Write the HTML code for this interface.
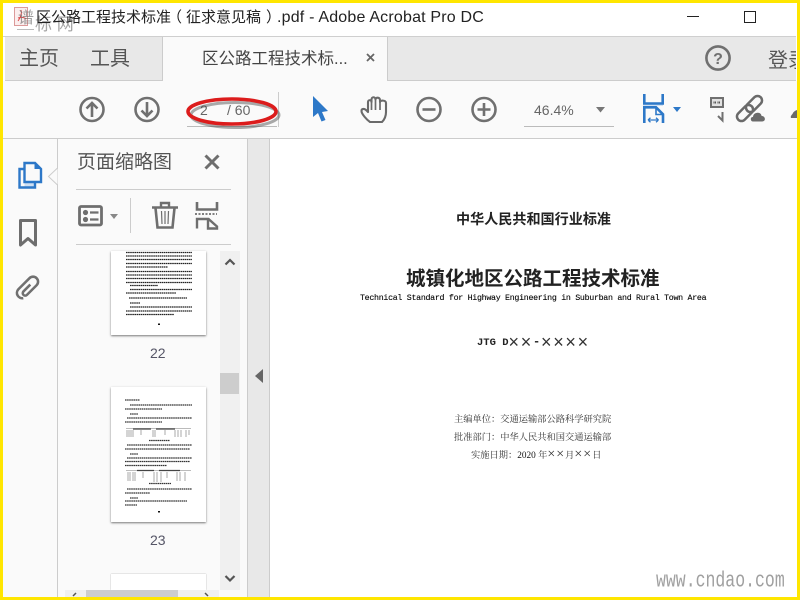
<!DOCTYPE html>
<html><head><meta charset="utf-8"><style>
html,body{margin:0;padding:0;width:800px;height:600px;overflow:hidden;background:#fff}
body{position:relative;font-family:"Liberation Sans","Noto Sans CJK SC",sans-serif;color:#444}
.a{position:absolute;white-space:nowrap}
.b{position:absolute}
.doc{font-family:"Liberation Serif","Noto Serif CJK SC",serif;color:#222}
svg{position:absolute;overflow:visible}
</style></head><body>
<div class="b" style="left:3px;top:36px;width:793px;height:1px;background:#cfcfcf"></div>
<div class="b" style="left:5px;top:37px;width:791px;height:43px;background:#e8e8e8"></div>
<div class="b" style="left:162px;top:37px;width:1px;height:44px;background:#ccc"></div>
<div class="b" style="left:163px;top:37px;width:224px;height:44px;background:#fafafa"></div>
<div class="b" style="left:387px;top:37px;width:1px;height:44px;background:#ccc"></div>
<div class="b" style="left:5px;top:80px;width:157px;height:1px;background:#ccc"></div>
<div class="b" style="left:388px;top:80px;width:408px;height:1px;background:#ccc"></div>
<div class="b" style="left:3px;top:81px;width:794px;height:57px;background:#fafafa"></div>
<div class="b" style="left:3px;top:138px;width:794px;height:1px;background:#ccc"></div>
<div class="b" style="left:3px;top:139px;width:54px;height:458px;background:#fafafa"></div>
<div class="b" style="left:57px;top:139px;width:1px;height:458px;background:#ccc"></div>
<div class="b" style="left:58px;top:139px;width:189px;height:458px;background:#fafafa"></div>
<div class="b" style="left:247px;top:139px;width:1px;height:458px;background:#ccc"></div>
<div class="b" style="left:248px;top:139px;width:21px;height:458px;background:#e8e8e8"></div>
<div class="b" style="left:269px;top:139px;width:1px;height:458px;background:#ccc"></div>

<!-- app icon + title -->
<svg style="left:0;top:0" width="100" height="36"><rect x="14.500" y="7.500" width="13" height="18" fill="#fbeeee" stroke="#dc9a9a"/><path d="M18 21c3-4 4-8 3-11m-3 8c3-1 6-1 8 1" fill="none" stroke="#d84a4a"/><path d="M17 29.500h17" stroke="#bbb"/></svg>
<div class="a" style="left:18px;top:8px;font-size:16px;line-height:22px;color:#777;opacity:.7">谱</div>
<div class="a" style="left:35px;top:14px;font-size:17px;line-height:22px;color:#888;opacity:.75">标 网</div>
<div class="a" style="left:36px;top:6px;font-size:15px;line-height:23px;color:#222">区公路工程技术标准</div>
<div class="a" style="left:167px;top:6px;font-size:15px;line-height:23px;color:#222">（</div>
<div class="a" style="left:186px;top:6px;font-size:15px;line-height:23px;color:#222">征求意见稿</div>
<div class="a" style="left:266px;top:6px;font-size:15px;line-height:23px;color:#222">）</div>
<div class="a" style="left:277px;top:6px;font-size:16px;line-height:23px;color:#222;letter-spacing:.19px">.pdf - Adobe Acrobat Pro DC</div>
<div class="b" style="left:687px;top:16px;width:12px;height:1px;background:#222"></div>
<div class="b" style="left:744px;top:11px;width:10px;height:10px;border:1px solid #222"></div>

<!-- tabs -->
<div class="a" style="left:19px;top:45px;font-size:20px;line-height:28px;color:#555">主页</div>
<div class="a" style="left:90px;top:45px;font-size:20px;line-height:28px;color:#555">工具</div>
<div class="a" style="left:202px;top:47px;font-size:16.500px;line-height:24px;color:#444">区公路工程技术标...</div>
<svg style="left:366px;top:53px" width="10" height="10"><path d="M1 1l7 7M8 1l-7 7" stroke="#666" stroke-width="1.800"/></svg>
<svg style="left:705px;top:45px" width="26" height="26"><circle cx="13" cy="13" r="11.600" fill="none" stroke="#707070" stroke-width="2.600"/><text x="13" y="19" text-anchor="middle" font-size="16" font-weight="700" fill="#707070" font-family="Liberation Sans">?</text></svg>
<div class="a" style="left:768px;top:47px;font-size:20px;line-height:28px;color:#555;width:28px;overflow:hidden">登录</div>

<!-- toolbar -->
<svg style="left:79px;top:96px" width="27" height="27"><circle cx="13" cy="13.500" r="11.500" fill="none" stroke="#707070" stroke-width="2.600"/><path d="M13 21V7.500M7.500 12.500L13 7l5.500 5.500" fill="none" stroke="#707070" stroke-width="2.600"/></svg>
<svg style="left:134px;top:96px" width="27" height="27"><circle cx="13" cy="13.500" r="11.500" fill="none" stroke="#707070" stroke-width="2.600"/><path d="M13 6v13.500M7.500 14.500L13 20l5.500-5.500" fill="none" stroke="#707070" stroke-width="2.600"/></svg>
<div class="b" style="left:187px;top:126px;width:90px;height:1px;background:#bbb"></div>
<div class="b" style="left:278px;top:92px;width:1px;height:35px;background:#ccc"></div>
<div class="a" style="left:200px;top:100px;font-size:14px;line-height:20px;color:#666">2</div>
<div class="a" style="left:227px;top:100px;font-size:14px;line-height:20px;color:#666">/ 60</div>
<svg style="left:186px;top:96px" width="96" height="34"><ellipse cx="47" cy="17" rx="44" ry="12.500" fill="none" stroke="#444" stroke-width="3" opacity=".45" transform="translate(2 2)"/><ellipse cx="46" cy="15.500" rx="44" ry="12.500" fill="none" stroke="#dc1c1c" stroke-width="3.600"/></svg>
<svg style="left:0;top:0" width="400" height="130"><path d="M313 96L328 111 322 112 325.500 120 321.500 121.500 318 113 313 117Z" fill="#2d78c8"/></svg>
<svg style="left:360px;top:95px" width="28" height="28"><path d="M10 27C7 25 1.500 19 1.500 16 1.500 13.500 4.500 13 7 16L8 17V7C8 4.500 11.500 4.500 11.500 7V4.500C11.500 1.500 15.500 1.500 15.500 4.500 15.500 2 20 2 20 5V7C20 5 26 5 26 8V17C26 22 24 25 22 27Z" fill="none" stroke="#6a6a6a" stroke-width="2.100" stroke-linejoin="round"/><path d="M11.500 6v9M15.500 4v11M20 6v9" stroke="#6a6a6a" stroke-width="1.700"/></svg>
<svg style="left:416px;top:96px" width="27" height="27"><circle cx="13" cy="13.500" r="11.500" fill="none" stroke="#707070" stroke-width="2.600"/><path d="M6.500 13.500h13" stroke="#707070" stroke-width="2.600"/></svg>
<svg style="left:471px;top:96px" width="27" height="27"><circle cx="13" cy="13.500" r="11.500" fill="none" stroke="#707070" stroke-width="2.600"/><path d="M6.500 13.500h13M13 7v13" stroke="#707070" stroke-width="2.600"/></svg>
<div class="a" style="left:534px;top:100px;font-size:14px;line-height:20px;color:#666">46.4%</div>
<svg style="left:596px;top:107px" width="10" height="6"><path d="M0 0h9L4.500 5.500z" fill="#777"/></svg>
<div class="b" style="left:524px;top:126px;width:90px;height:1px;background:#bbb"></div>
<svg style="left:642px;top:94px" width="24" height="30"><rect x="1" y="10" width="20" height="2" fill="#cfe0f3"/><path d="M2.300 0v9.500h18.400V0" fill="none" stroke="#2d78c8" stroke-width="2.600"/><path d="M2.300 29V13.300H14l7 7V29" fill="none" stroke="#2d78c8" stroke-width="2.600"/><path d="M14 13v7.500h7" fill="none" stroke="#2d78c8" stroke-width="1.600"/><path d="M6 26h10.500M6 26l2.500-2.200M6 26l2.500 2.200M16.500 26L14 23.800M16.500 26L14 28.200" stroke="#2d78c8" stroke-width="1.300" fill="none"/></svg>
<svg style="left:673px;top:107px" width="9" height="6"><path d="M0 0h8L4 5z" fill="#2d78c8"/></svg>
<svg style="left:710px;top:97px" width="13" height="26"><path d="M1 1h12v9H1z" fill="#e2e2e2" stroke="#707070" stroke-width="2"/><path d="M3.500 5.500h2.500M7.500 5.500h2.500" stroke="#555" stroke-width="2" stroke-dasharray="1.100 .4"/><path d="M8 19l4.500 4.500V15" fill="none" stroke="#707070" stroke-width="2"/></svg>
<svg style="left:736px;top:96px" width="30" height="27"><g fill="none" stroke="#6a6a6a" stroke-width="2.500"><rect x="-9.500" y="-4.500" width="19" height="9" rx="4.500" transform="translate(18 8) rotate(-45)"/><rect x="-9.500" y="-4.500" width="19" height="9" rx="4.500" transform="translate(9 17) rotate(-45)"/></g><path d="M17 26c-3 0-4-5-.5-5.500C17.500 15 25 15 26 19.500c4 0 5 6.500 0 6.500z" fill="#6a6a6a" stroke="#fafafa"/></svg>
<svg style="left:790px;top:108px" width="7" height="12"><path d="M1 10C0 8 2 7 3 5 4 3 7 2 7 2v8z" fill="#6a6a6a"/></svg>

<!-- left rail -->
<svg style="left:18px;top:161px" width="25" height="28"><path d="M6.500 21h10v4.500H6.500z" fill="#cfe0f3"/><path d="M5.500 8H1.500v18.500h15.500V21.500" fill="none" stroke="#2d78c8" stroke-width="2.400"/><path d="M6.500 2H17l6 6v13H6.500z" fill="#fafafa" stroke="#2d78c8" stroke-width="2.400"/><path d="M16.500 1.500l6.500 6.500h-6.500z" fill="#2d78c8"/></svg>
<svg style="left:48px;top:168px" width="10" height="17"><path d="M9.500 0L.5 8.500l9 8.500" fill="#fafafa" stroke="#ccc"/></svg>
<svg style="left:19px;top:219px" width="18" height="28"><path d="M1.500 1.500h15v24.500L9 19.500 1.500 26z" fill="none" stroke="#6e6e6e" stroke-width="3" stroke-linejoin="round"/></svg>
<svg style="left:0;top:0" width="60" height="320"><path d="M-.5-5V6a2.800 2.800 0 0 0 5.600 0V-9.500a5.700 5.700 0 0 0-11.400 0V8.500a6 6 0 0 0 11 3" transform="translate(27.500 288) rotate(45) scale(.88)" fill="none" stroke="#707070" stroke-width="2.900"/></svg>

<!-- panel -->
<div class="a" style="left:77px;top:150px;font-size:19px;line-height:26px;color:#555">页面缩略图</div>
<svg style="left:204px;top:154px" width="16" height="16"><path d="M1.500 1.500l13 13M14.500 1.500l-13 13" stroke="#6e6e6e" stroke-width="3"/></svg>
<div class="b" style="left:76px;top:189px;width:155px;height:1px;background:#ccc"></div>
<div class="b" style="left:76px;top:244px;width:155px;height:1px;background:#ccc"></div>
<div class="b" style="left:130px;top:198px;width:1px;height:35px;background:#ccc"></div>
<svg style="left:78px;top:205px" width="26" height="22"><rect x="1.500" y="1.500" width="22" height="18.500" rx="1.500" fill="none" stroke="#6e6e6e" stroke-width="2.800"/><circle cx="7.500" cy="7.500" r="2.600" fill="#6e6e6e"/><circle cx="7.500" cy="14.500" r="2.600" fill="#6e6e6e"/><path d="M12 7.500h8.500M12 14.500h8.500" stroke="#6e6e6e" stroke-width="2.200"/></svg>
<svg style="left:110px;top:214px" width="9" height="6"><path d="M0 0h8L4 5z" fill="#888"/></svg>
<svg style="left:152px;top:201px" width="26" height="28"><path d="M0 6.500h26M9 6V2h8v4" fill="none" stroke="#6e6e6e" stroke-width="2.400"/><path d="M3.500 7l2 19.500h15l2-19.500" fill="none" stroke="#6e6e6e" stroke-width="2.600"/><path d="M9.500 10l.5 13M13 10v13M16.500 10l-.5 13" stroke="#6e6e6e" stroke-width="1.200"/></svg>
<svg style="left:194px;top:202px" width="24" height="27"><path d="M3 0v7.500h20V0" fill="none" stroke="#6e6e6e" stroke-width="2.600"/><path d="M1 12h22" stroke="#6e6e6e" stroke-width="1.800" stroke-dasharray="2 1.500"/><path d="M3 26.500V17h11.500l8.500 7.500v2h-9V17" fill="none" stroke="#6e6e6e" stroke-width="2.400"/></svg>

<!-- thumbs -->
<div class="b" style="left:111px;top:251px;width:95px;height:84px;background:#fff;box-shadow:0 1px 2px #777"></div>
<div class="b" style="left:111px;top:387px;width:95px;height:135px;box-shadow:0 1px 2px #777;background:#fff"></div>
<div class="b" style="left:111px;top:574px;width:95px;height:16px;background:#fff;box-shadow:0 0 1px #999"></div>
<svg style="left:0;top:0" width="800" height="600">
<g stroke="#222" stroke-width="1.300" stroke-dasharray="1.600 .5" fill="none">
<path d="M126 252.500h66M126 256h66M126 259.500h66M126 263.500h66M126 267h42M126 271.500h66M126 275h66M126 278.500h66M126 282.500h66M130 285.500h28M130 289.500h62M126 293h50M129 298h58M130 303h10M130 307h62M126 311h66M126 314.500h48"/>
</g>
<rect x="158" y="323.500" width="2" height="1.500" fill="#111"/>
<g stroke="#333" stroke-width="1.200" stroke-dasharray="1.600 .5" fill="none">
<path d="M125 400h15M130 405h62M125 409h37M130 414h8M127 418h65M125 422h37M149 440.500h21M127 445h65M125 449h65M130 454h8M127 458h65M125 461.500h65M125 465.500h42M149 483.500h22M127 489h65M125 493h25M130 498h8M125 501h62M125 505h12"/>
</g>
<g fill="none">
<path d="M126 428.500h65M126 470.500h65" stroke="#bbb"/>
<path d="M133 429h18M156 429h19M137 470.500h17M159 470.500h21" stroke="#444" stroke-width="1.300"/>
<path d="M127 430v7M129 430v7M131 430v7M133 430v7M141 430v5M153 430v7M155 430v7M165 430v5M175 430v7M178 430v7M181 430v7M186 430v7M189 430v5M128 472v9M130 472v9M133 472v9M135 472v9M143 472v6M154 472v10M157 472v10M161 472v10M167 472v6M177 472v9M180 472v9M185 472v9" stroke="#aaa" stroke-width="1"/>
</g>
<rect x="158" y="511" width="2" height="1.500" fill="#111"/>
</svg>
<div class="a" style="left:150px;top:345px;font-size:14px;line-height:17px;color:#556">22</div>
<div class="a" style="left:150px;top:532px;font-size:14px;line-height:17px;color:#556">23</div>

<!-- scrollbars -->
<div class="b" style="left:220px;top:251px;width:20px;height:339px;background:#f0f0f0"></div>
<div class="b" style="left:220px;top:373px;width:19px;height:21px;background:#cdcdcd"></div>
<svg style="left:225px;top:259px" width="10" height="6"><path d="M.5 5.500L5 1l4.500 4.500" fill="none" stroke="#555" stroke-width="2.200"/></svg>
<svg style="left:225px;top:575px" width="10" height="6"><path d="M.5 1L5 5.500l4.500-4.500" fill="none" stroke="#555" stroke-width="2.200"/></svg>
<div class="b" style="left:65px;top:590px;width:154px;height:7px;background:#f0f0f0"></div>
<div class="b" style="left:86px;top:590px;width:92px;height:7px;background:#cdcdcd"></div>
<svg style="left:72px;top:593px" width="5" height="5"><path d="M4 0L1 3" stroke="#555" stroke-width="1.500"/></svg>
<svg style="left:204px;top:593px" width="5" height="5"><path d="M1 0l3 3" stroke="#555" stroke-width="1.500"/></svg>
<svg style="left:255px;top:369px" width="9" height="14"><path d="M8 0v14L0 7z" fill="#666"/></svg>

<!-- doc -->
<div class="a" style="left:456px;top:209px;font-size:14.100px;line-height:20px;font-weight:700;color:#222">中华人民共和国行业标准</div>
<div class="a" style="left:406px;top:266px;font-size:19.500px;line-height:27px;font-weight:700;color:#222">城镇化地区公路工程技术标准</div>
<div class="a" style="left:360px;top:293px;font-size:8.300px;line-height:12px;font-family:'Liberation Mono',monospace;color:#000;letter-spacing:-.3px;-webkit-text-stroke:.1px #000">Technical Standard for Highway Engineering in Suburban and Rural Town Area</div>
<div class="a" style="left:477px;top:335px;font-size:10.500px;line-height:16px;font-family:'Liberation Mono',monospace;color:#222;font-weight:700">JTG D</div>
<div class="a" style="left:508.500px;top:331px;font-size:18px;line-height:22px;color:#333;letter-spacing:1.700px">××</div>
<div class="a" style="left:533px;top:334px;font-size:12px;line-height:16px;font-family:'Liberation Mono',monospace;color:#222;font-weight:700">-</div>
<div class="a" style="left:541px;top:331px;font-size:18px;line-height:22px;color:#333;letter-spacing:1.700px">××××</div>
<div class="a doc" style="left:454px;top:413px;font-size:9.250px;line-height:14px;color:#333">主编单位：交通运输部公路科学研究院</div>
<div class="a doc" style="left:454px;top:431px;font-size:9.250px;line-height:14px;color:#333">批准部门：中华人民共和国交通运输部</div>
<div class="a doc" style="left:471px;top:449px;font-size:9.250px;line-height:14px;color:#333">实施日期：<span style="color:#111">2020</span> 年<span style="font-size:14px;line-height:10px;letter-spacing:1px">××</span>月<span style="font-size:14px;line-height:10px;letter-spacing:1px">××</span>日</div>
<div class="a" style="left:656px;top:570px;font-size:16.500px;line-height:22px;font-family:'Liberation Mono',monospace;color:#a0a0a0;transform-origin:0 50%;transform:scaleY(1.35)">www.cndao.com</div>

<!-- yellow frame -->
<div class="b" style="left:0;top:0;width:800px;height:3px;background:#ffe600"></div>
<div class="b" style="left:0;bottom:0;width:800px;height:3px;background:#ffe600"></div>
<div class="b" style="left:0;top:0;width:3px;height:600px;background:#ffe600"></div>
<div class="b" style="right:0;top:0;width:3px;height:600px;background:#ffe600"></div>
</body></html>
